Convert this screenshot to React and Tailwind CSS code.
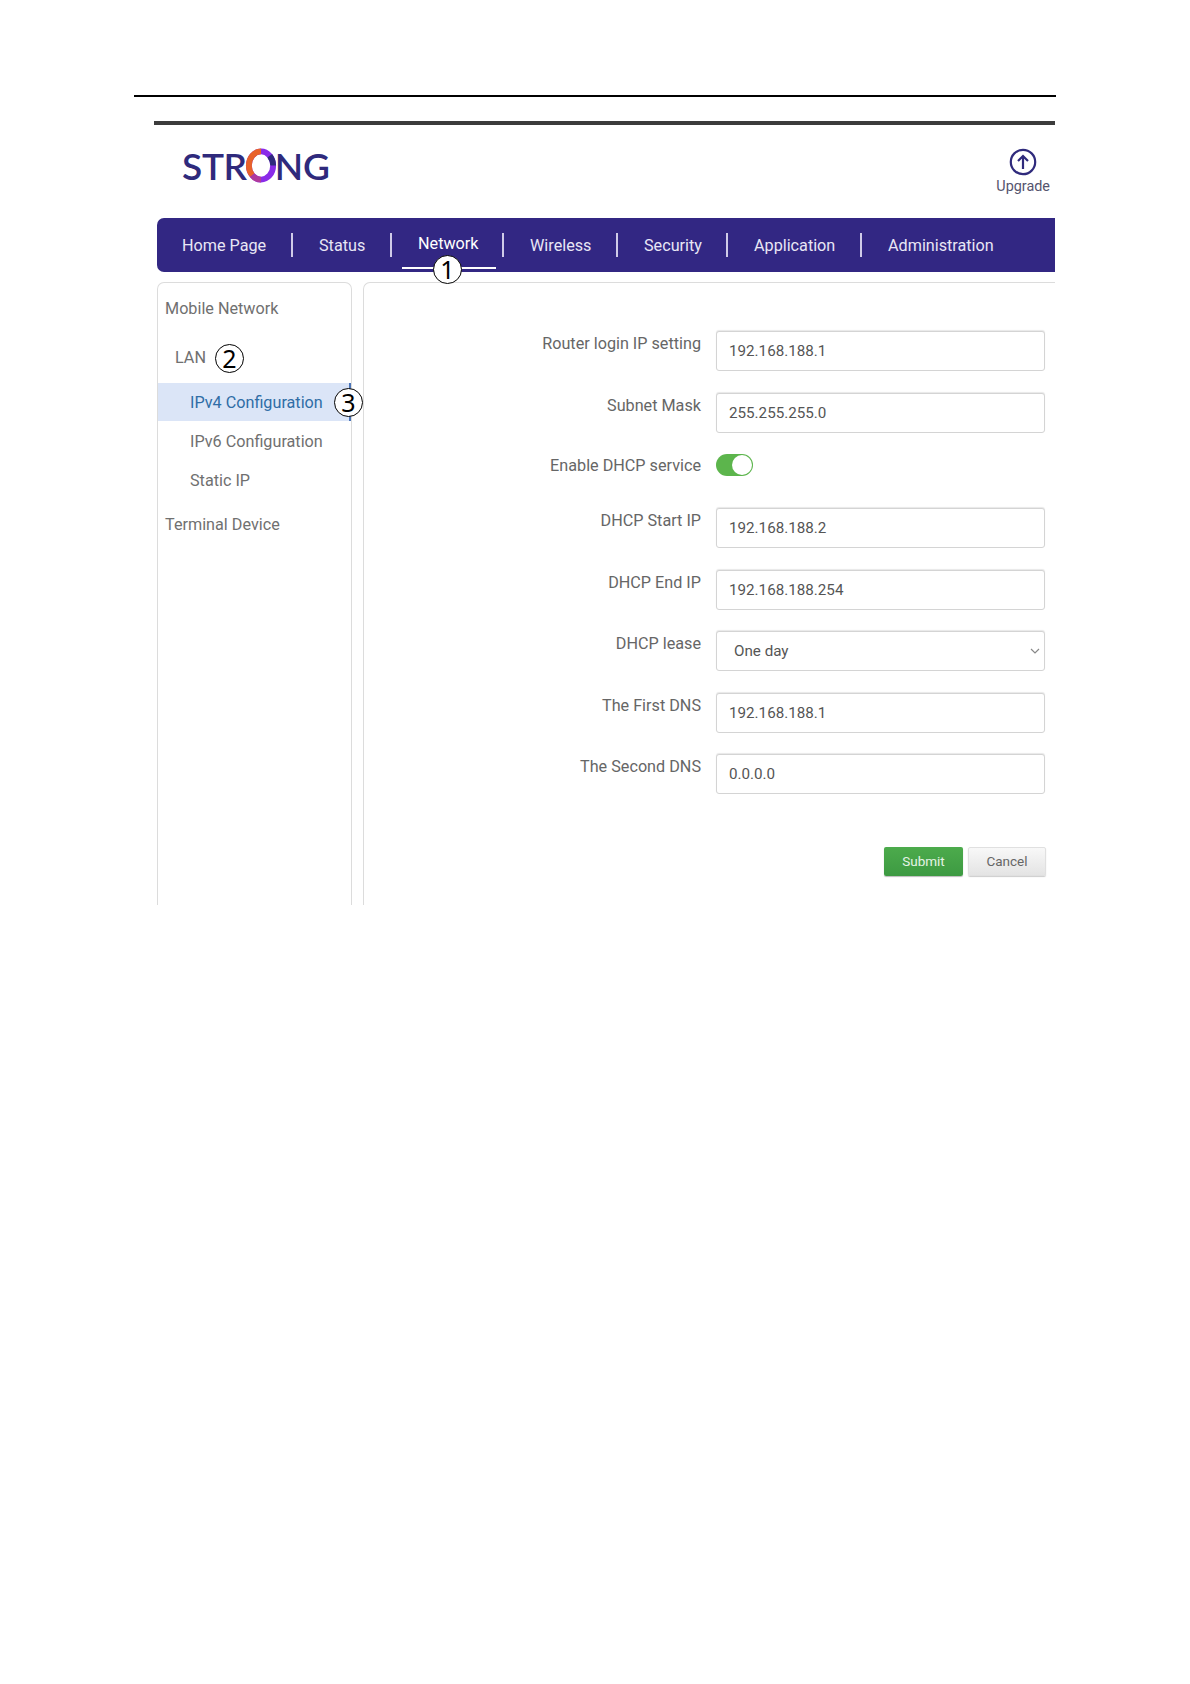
import React from 'react';

const navItems = [
    { label: "Home Page", width: "w-[137px]" },
    { label: "Status", width: "w-[99px]" },
    { label: "Network", width: "w-[112px]", active: true },
    { label: "Wireless", width: "w-[114px]" },
    { label: "Security", width: "w-[110px]" },
    { label: "Application", width: "w-[134px]" },
    { label: "Administration", width: "w-[130px]", last: true },
];

const Badge = ({ n, className = "" }) => (
    <span className={`flex h-[29px] w-[29px] items-center justify-center rounded-full border border-black bg-white text-[25px] leading-none text-black font-['Noto_Sans',sans-serif] ${className}`}>
        {n}
    </span>
);

const Field = ({ label, value }) => (
    <div className="mb-[21.5px] flex h-[40px] items-start">
        <label className="w-[352px] pr-[15px] pt-[1px] text-right text-[16.2px] leading-[24px] text-[#666]">{label}</label>
        <input
            readOnly
            value={value}
            className="h-[40px] w-[329px] rounded-[3px] border border-[#d4d4d4] bg-white px-[12px] text-[15.2px] text-[#555] shadow-[0_-1px_1px_#e8e8e8] outline-none"
        />
    </div>
);

const Logo = () => (
    <div className="flex h-[36px] items-center text-[37px] leading-none font-semibold tracking-[-0.3px] text-[#2f2a7c] font-['Lato',sans-serif]">
        <span>STR</span>
        <svg viewBox="0 0 32 36" className="-mx-[2px] h-[35px] w-[32px]" fill="none" strokeWidth="6">
            <ellipse cx="16" cy="18" rx="12.5" ry="14.5" stroke="#8a2be8" />
            <path d="M16 3.5C9 3.5 3.5 10 3.5 18c0 4 1.5 7.5 3.5 10" stroke="#e8622a" />
            <path d="M7 28c2 2.800 5.500 4.500 9 4.500" stroke="#b03a9c" />
            <path d="M25 8c2 2.800 3.500 6 3.500 10" stroke="#2f2a7c" />
        </svg>
        <span>NG</span>
    </div>
);

const App = () => {
    return (
        <div className="relative h-[1684px] w-[1190px] overflow-hidden bg-white font-['Roboto',sans-serif]">
            <div className="ml-[134px] mt-[95px] h-[2px] w-[922px] bg-black" />
            <div className="ml-[154px] mt-[24px] w-[901px]">
                <div className="h-[4px] bg-[#3c3c3c]" />

                <div className="flex h-[93px] items-start justify-between">
                    <div className="ml-[28px] mt-[22px]">
                        <Logo />
                    </div>
                    <div className="mr-[5px] mt-[23px] flex flex-col items-center text-[#55546e]">
                        <svg viewBox="0 0 28 28" className="h-[28px] w-[28px]" fill="none" stroke="#2f2a7c" strokeWidth="2.2">
                            <circle cx="14" cy="14" r="12.2" />
                            <path d="M14 21V8M9 13l5-5 5 5" />
                        </svg>
                        <span className="mt-[2px] text-[14.4px] leading-[18px]">Upgrade</span>
                    </div>
                </div>

                <nav className="ml-[3px] flex h-[54px] items-center rounded-l-[7px] bg-[#322783] pl-[25px] text-[16.2px] text-[#e8e6f5]">
                    {navItems.map((item) => (
                        <div key={item.label} className={`relative flex h-[24px] shrink-0 items-center ${item.width}`}>
                            <span className={item.active ? "-mt-[2px] text-white" : "pt-[2px]"}>{item.label}</span>
                            {!item.last && <span className="absolute right-[26px] top-0 h-[24px] w-[2px] bg-[#cfcbe8]" />}
                            {item.active && (
                                <>
                                    <span className="absolute -left-[16px] top-[34px] h-[2px] w-[94px] bg-white" />
                                    <Badge n="1" className="absolute left-[15px] top-[22px]" />
                                </>
                            )}
                        </div>
                    ))}
                </nav>

                <div className="ml-[3px] mt-[10px] flex h-[623px] gap-[11px]">
                    <aside className="relative w-[195px] rounded-t-[7px] border border-b-0 border-[#dcdcdc] text-[16.2px] text-[#707070]">
                        <div className="flex h-[50px] items-center pl-[7px] pt-[2px]">Mobile Network</div>
                        <div className="flex h-[50px] items-center pl-[17px]">
                            LAN
                            <Badge n="2" className="ml-[9px]" />
                        </div>
                        <div className="relative flex h-[38px] items-center border-r-2 border-[#4a74b8] bg-[#dbe5f7] pl-[32px] pt-[2px] text-[#2f6da6]">
                            IPv4 Configuration
                            <Badge n="3" className="absolute -right-[14px] top-[5px]" />
                        </div>
                        <div className="flex h-[40px] items-center pl-[32px] pt-[2px]">IPv6 Configuration</div>
                        <div className="flex h-[40px] items-center pl-[32px]">Static IP</div>
                        <div className="flex h-[46px] items-center pl-[7px] pt-[2px]">Terminal Device</div>
                    </aside>

                    <main className="flex-1 rounded-tl-[7px] border-l border-t border-[#dcdcdc] pt-[48px]">
                        <Field label="Router login IP setting" value="192.168.188.1" />
                        <Field label="Subnet Mask" value="255.255.255.0" />

                        <div className="mb-[32px] flex h-[22px] items-center">
                            <label className="w-[352px] pr-[15px] pt-[2px] text-right text-[16.2px] leading-[24px] text-[#666]">Enable DHCP service</label>
                            <div className="flex h-[22px] w-[37px] items-center justify-end rounded-full bg-[#5cb54c] pr-[1px]">
                                <span className="h-[20px] w-[20px] rounded-full bg-white" />
                            </div>
                        </div>

                        <Field label="DHCP Start IP" value="192.168.188.2" />
                        <Field label="DHCP End IP" value="192.168.188.254" />

                        <div className="mb-[21.5px] flex h-[40px] items-start">
                            <label className="w-[352px] pr-[15px] pt-[1px] text-right text-[16.2px] leading-[24px] text-[#666]">DHCP lease</label>
                            <div className="flex h-[40px] w-[329px] items-center justify-between rounded-[3px] border border-[#d4d4d4] bg-white pl-[17px] pr-[3px] text-[15.2px] text-[#555] shadow-[0_-1px_1px_#e8e8e8]">
                                <span className="pt-[1px]">One day</span>
                                <svg viewBox="0 0 12 12" className="h-[12px] w-[12px]" fill="none" stroke="#888" strokeWidth="1.2">
                                    <path d="M2 4l4 4 4-4" />
                                </svg>
                            </div>
                        </div>

                        <Field label="The First DNS" value="192.168.188.1" />
                        <Field label="The Second DNS" value="0.0.0.0" />

                        <div className="ml-[520px] mt-[53px] flex gap-[5px] text-[13.5px]">
                            <button className="h-[29px] w-[79px] rounded-[2px] bg-gradient-to-b from-[#4cab4c] to-[#3d9a42] text-[#e6f4e6] shadow-[0_1px_1px_#bbb]">Submit</button>
                            <button className="h-[29px] w-[78px] rounded-[2px] border border-[#e0e0e0] bg-gradient-to-b from-[#f8f8f8] to-[#e4e4e4] text-[#666] shadow-[0_1px_1px_#ccc]">Cancel</button>
                        </div>
                    </main>
                </div>
            </div>
        </div>
    );
};

export default App;
